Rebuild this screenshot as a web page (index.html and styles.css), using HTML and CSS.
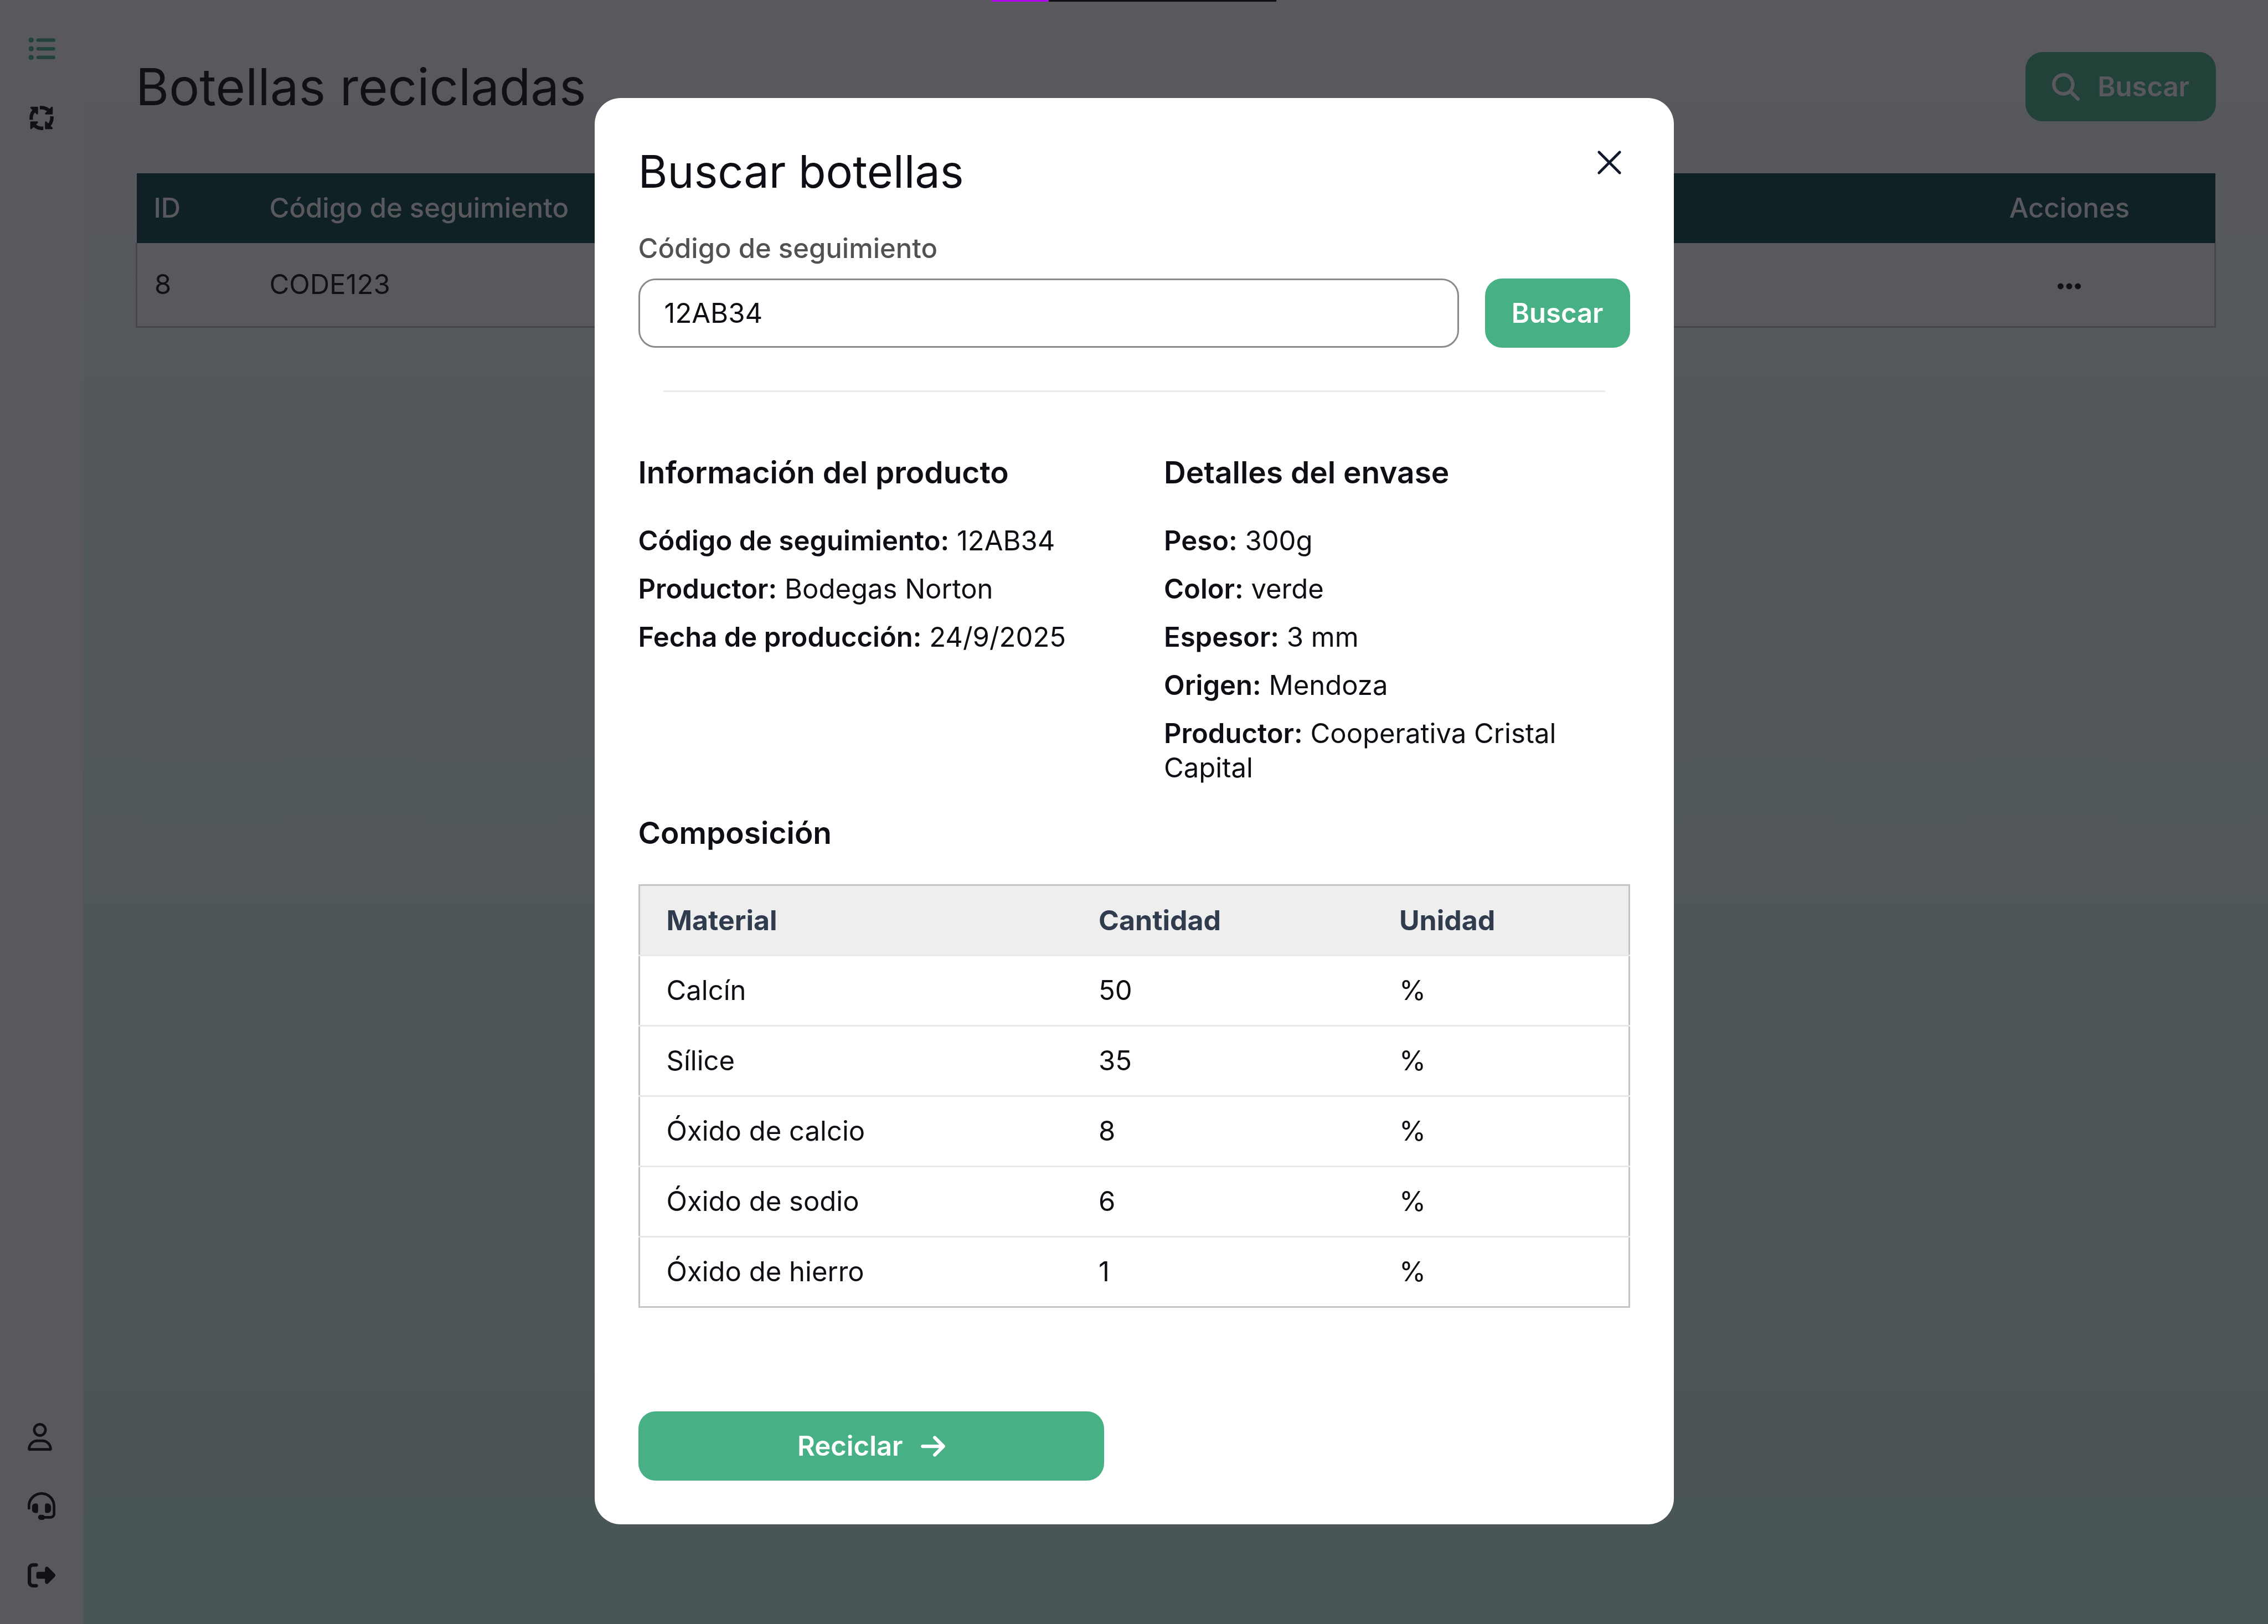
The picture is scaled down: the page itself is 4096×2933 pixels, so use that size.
FILE: index.html
```html
<!DOCTYPE html>
<html lang="es">
<head>
<meta charset="utf-8">
<title>Botellas recicladas</title>
<link rel="stylesheet" href="styles.css">
</head>
<body>
<div class="app">
  <nav class="sidebar" aria-label="Principal">
    <div class="nav-group">
      <a class="nav-link active" href="#botellas" aria-label="Botellas"><svg class="icon" viewBox="0 0 512 512"><path d="M64 144a48 48 0 1 0 0-96 48 48 0 1 0 0 96zM192 64c-17.700 0-32 14.300-32 32s14.300 32 32 32H480c17.700 0 32-14.300 32-32s-14.300-32-32-32H192zm0 160c-17.700 0-32 14.300-32 32s14.300 32 32 32H480c17.700 0 32-14.300 32-32s-14.300-32-32-32H192zm0 160c-17.700 0-32 14.300-32 32s14.300 32 32 32H480c17.700 0 32-14.300 32-32s-14.300-32-32-32H192zM64 464a48 48 0 1 0 0-96 48 48 0 1 0 0 96zm48-208a48 48 0 1 0 -96 0 48 48 0 1 0 96 0z"/></svg></a>
      <a class="nav-link" href="#reciclaje" aria-label="Reciclaje"><svg class="icon" viewBox="0 0 512 512"><path d="M256 96c38.4 0 73.700 13.500 101.300 36.100l-32.600 32.600c-4.600 4.600-5.900 11.500-3.500 17.400s8.300 9.900 14.800 9.900H448c8.800 0 16-7.200 16-16V64c0-6.500-3.900-12.300-9.900-14.800s-12.900-1.100-17.400 3.500l-34 34C363.400 52.600 312.100 32 256 32c-10.900 0-21.500 .8-32 2.300V99.200c10.300-2.100 21-3.200 32-3.200zM132.100 154.700l32.600 32.600c4.600 4.600 11.500 5.900 17.400 3.500s9.900-8.300 9.900-14.800V64c0-8.800-7.200-16-16-16H64c-6.500 0-12.300 3.900-14.800 9.900s-1.100 12.900 3.500 17.400l34 34C52.600 148.600 32 199.900 32 256c0 10.900 .8 21.500 2.300 32H99.200c-2.100-10.300-3.200-21-3.200-32c0-38.400 13.500-73.700 36.100-101.300zM477.700 224H412.800c2.100 10.300 3.200 21 3.200 32c0 38.400-13.500 73.700-36.100 101.300l-32.600-32.600c-4.600-4.600-11.500-5.900-17.400-3.500s-9.900 8.300-9.900 14.800V448c0 8.800 7.200 16 16 16H448c6.500 0 12.300-3.900 14.800-9.900s1.100-12.900-3.500-17.400l-34-34C459.400 363.400 480 312.100 480 256c0-10.900-.8-21.500-2.300-32zM256 416c-38.400 0-73.700-13.500-101.300-36.100l32.600-32.600c4.600-4.600 5.900-11.500 3.500-17.400s-8.300-9.900-14.800-9.900H64c-8.800 0-16 7.200-16 16l0 112c0 6.500 3.900 12.300 9.900 14.800s12.900 1.100 17.400-3.500l34-34C148.600 459.400 199.900 480 256 480c10.900 0 21.500-.8 32-2.300V412.800c-10.300 2.100-21 3.200-32 3.200z"/></svg></a>
    </div>
    <div class="nav-group">
      <a class="nav-link" href="#perfil" aria-label="Perfil"><svg class="icon icon-narrow" viewBox="0 0 448 512"><path d="M304 128a80 80 0 1 0 -160 0 80 80 0 1 0 160 0zM96 128a128 128 0 1 1 256 0A128 128 0 1 1 96 128zM49.300 464H398.700c-8.900-63.300-63.300-112-129-112H178.300c-65.700 0-120.100 48.700-129 112zM0 482.300C0 383.800 79.800 304 178.300 304h91.400C368.200 304 448 383.800 448 482.300c0 16.400-13.300 29.700-29.700 29.700H29.700C13.300 512 0 498.700 0 482.300z"/></svg></a>
      <a class="nav-link" href="#soporte" aria-label="Soporte"><svg class="icon" viewBox="0 0 512 512"><path d="M256 48C141.100 48 48 141.100 48 256v40c0 13.300-10.700 24-24 24s-24-10.700-24-24V256C0 114.600 114.600 0 256 0S512 114.600 512 256V400.100c0 48.600-39.400 88-88.100 88L313.600 488c-8.300 14.300-23.800 24-41.600 24H240c-26.500 0-48-21.500-48-48s21.500-48 48-48h32c17.800 0 33.300 9.700 41.600 24l110.400 .1c22.100 0 40-17.900 40-40V256c0-114.900-93.100-208-208-208zM144 208h16c17.700 0 32 14.300 32 32V352c0 17.700-14.300 32-32 32H144c-35.300 0-64-28.700-64-64V272c0-35.300 28.700-64 64-64zm224 0c35.300 0 64 28.700 64 64v48c0 35.300-28.700 64-64 64H352c-17.700 0-32-14.300-32-32V240c0-17.700 14.300-32 32-32h16z"/></svg></a>
      <a class="nav-link" href="#salir" aria-label="Salir"><svg class="icon" viewBox="0 0 512 512"><path d="M377.900 105.900L500.700 228.700c7.200 7.200 11.300 17.100 11.300 27.300s-4.100 20.100-11.300 27.300L377.900 406.100c-6.400 6.400-15 9.900-24 9.900c-18.700 0-33.900-15.200-33.900-33.900l0-62.100-128 0c-17.700 0-32-14.300-32-32l0-64c0-17.700 14.300-32 32-32l128 0 0-62.100c0-18.700 15.200-33.900 33.900-33.900c9 0 17.600 3.600 24 9.900zM160 96L96 96c-17.700 0-32 14.300-32 32l0 256c0 17.700 14.300 32 32 32l64 0c17.700 0 32 14.300 32 32s-14.300 32-32 32l-64 0c-53 0-96-43-96-96L0 128C0 75 43 32 96 32l64 0c17.700 0 32 14.300 32 32s-14.300 32-32 32z"/></svg></a>
    </div>
  </nav>

  <main class="main">
    <header class="page-header">
      <h1 class="page-title">Botellas recicladas</h1>
      <button class="btn" type="button"><svg class="icon" viewBox="0 0 512 512"><path d="M416 208c0 45.900-14.900 88.300-40 122.700L502.600 457.400c12.500 12.500 12.500 32.800 0 45.300s-32.800 12.500-45.300 0L330.700 376c-34.400 25.200-76.800 40-122.700 40C93.100 416 0 322.900 0 208S93.100 0 208 0S416 93.100 416 208zM208 352a144 144 0 1 0 0-288 144 144 0 1 0 0 288z"/></svg>Buscar</button>
    </header>
    <table class="bottles">
      <thead>
        <tr><th class="col-id">ID</th><th>Código de seguimiento</th><th class="col-actions">Acciones</th></tr>
      </thead>
      <tbody>
        <tr>
          <td>8</td>
          <td>CODE123</td>
          <td class="col-actions"><button class="icon-btn" type="button" aria-label="Acciones"><svg class="icon icon-narrow" viewBox="0 0 448 512"><path d="M8 256a56 56 0 1 1 112 0A56 56 0 1 1 8 256zm160 0a56 56 0 1 1 112 0 56 56 0 1 1 -112 0zm216-56a56 56 0 1 1 0 112 56 56 0 1 1 0-112z"/></svg></button></td>
        </tr>
      </tbody>
    </table>
  </main>
</div>

<div class="overlay">
  <section class="modal" role="dialog" aria-modal="true" aria-labelledby="modal-title">
    <header class="modal-header">
      <h2 class="modal-title" id="modal-title">Buscar botellas</h2>
      <button class="icon-btn" type="button" aria-label="Cerrar"><svg class="close-icon" viewBox="0 0 24 24"><path d="M6 18 18 6M6 6l12 12"/></svg></button>
    </header>

    <form class="search">
      <label class="search-label" for="codigo">Código de seguimiento</label>
      <div class="search-row">
        <input class="search-input" id="codigo" type="text" value="12AB34">
        <button class="btn" type="button">Buscar</button>
      </div>
    </form>

    <hr class="divider">

    <div class="details">
      <section>
        <h3 class="section-title">Información del producto</h3>
        <ul class="facts">
          <li><strong>Código de seguimiento:</strong> 12AB34</li>
          <li><strong>Productor:</strong> Bodegas Norton</li>
          <li><strong>Fecha de producción:</strong> 24/9/2025</li>
        </ul>
      </section>
      <section>
        <h3 class="section-title">Detalles del envase</h3>
        <ul class="facts">
          <li><strong>Peso:</strong> 300g</li>
          <li><strong>Color:</strong> verde</li>
          <li><strong>Espesor:</strong> 3 mm</li>
          <li><strong>Origen:</strong> Mendoza</li>
          <li><strong>Productor:</strong> Cooperativa Cristal Capital</li>
        </ul>
      </section>
    </div>

    <h3 class="section-title composition-title">Composición</h3>
    <table class="composition">
      <colgroup><col class="col-material"><col class="col-amount"><col></colgroup>
      <thead>
        <tr><th>Material</th><th>Cantidad</th><th>Unidad</th></tr>
      </thead>
      <tbody>
        <tr><td>Calcín</td><td>50</td><td>%</td></tr>
        <tr><td>Sílice</td><td>35</td><td>%</td></tr>
        <tr><td>Óxido de calcio</td><td>8</td><td>%</td></tr>
        <tr><td>Óxido de sodio</td><td>6</td><td>%</td></tr>
        <tr><td>Óxido de hierro</td><td>1</td><td>%</td></tr>
      </tbody>
    </table>

    <footer class="modal-footer">
      <button class="btn" type="button">Reciclar<svg class="icon icon-narrow" viewBox="0 0 448 512"><path d="M438.600 278.600c12.500-12.500 12.500-32.800 0-45.300l-160-160c-12.500-12.500-32.800-12.500-45.300 0s-12.500 32.800 0 45.300L338.800 224 32 224c-17.700 0-32 14.300-32 32s14.300 32 32 32l306.700 0L233.400 393.400c-12.500 12.500-12.500 32.800 0 45.300s32.800 12.500 45.300 0l160-160z"/></svg></button>
    </footer>
  </section>
</div>
<div class="progress" aria-hidden="true"><div class="progress-value"></div></div>
</body>
</html>
```
FILE: styles.css
```css
:root {
  --green: #47b185;
  --dark-green: #074645;
  --ink: #0f0e14;
  --border: #c4c4c4;
}

* {
  box-sizing: border-box;
}

body {
  margin: 0;
  color: var(--ink);
  font-family: Inter, "Liberation Sans", sans-serif;
  font-size: 49px;
  line-height: 62px;
}

h1, h2, h3, ul {
  margin: 0;
  padding: 0;
  list-style: none;
}

button, input {
  color: inherit;
  font: inherit;
}

table {
  width: 100%;
  border-collapse: collapse;
  table-layout: fixed;
}

th {
  text-align: left;
}

strong {
  font-weight: 600;
}

.icon {
  display: block;
  width: 50px;
  height: 50px;
  fill: currentColor;
}

.icon-narrow {
  width: 44px;
}

.btn {
  display: flex;
  align-items: center;
  justify-content: center;
  gap: 32px;
  height: 125px;
  padding: 0 48px;
  border: 0;
  border-radius: 31px;
  background: var(--green);
  color: #fff;
  font-weight: 600;
}

.icon-btn {
  display: inline-flex;
  padding: 0;
  border: 0;
  background: none;
}

/* Application frame */

.app {
  display: flex;
  min-height: 100vh;
  background: linear-gradient(#fff, #eefcfa 20%, #cbf5e7);
}

.sidebar {
  display: flex;
  flex: none;
  flex-direction: column;
  justify-content: space-between;
  width: 151px;
  padding: 63px 50px;
  background: #fff;
}

.nav-group {
  display: flex;
  flex-direction: column;
  gap: 75px;
}

.nav-link {
  color: var(--ink);
}

.nav-link.active {
  color: var(--green);
}

.main {
  flex: 1;
  padding: 94px;
}

.page-header {
  display: flex;
  align-items: center;
  justify-content: space-between;
  margin-bottom: 94px;
}

.page-title {
  font-size: 92px;
  font-weight: 400;
  line-height: 125px;
}

.bottles {
  background: #fff;
}

.bottles th {
  height: 126px;
  padding: 0 31px;
  background: var(--dark-green);
  color: #fff;
  font-weight: 500;
}

.bottles td {
  height: 151px;
  padding: 0 31px;
}

.bottles tbody {
  border: 3px solid var(--border);
  border-top: 0;
}

.bottles .col-id {
  width: 209px;
}

.bottles .col-actions {
  width: 526px;
  text-align: center;
}

.bottles .icon-btn {
  vertical-align: middle;
}

/* Search dialog */

.overlay {
  position: fixed;
  inset: 0;
  display: flex;
  align-items: flex-start;
  justify-content: center;
  padding-top: 177px;
  overflow: auto;
  background: rgba(19, 17, 24, 0.7);
}

.modal {
  width: 1949px;
  padding: 79px;
  border-radius: 47px;
  background: #fff;
}

.modal-header {
  display: flex;
  align-items: flex-start;
  justify-content: space-between;
  margin-bottom: 54px;
}

.modal-title {
  font-size: 81px;
  font-weight: 400;
  line-height: 108px;
}

.close-icon {
  display: block;
  width: 75px;
  height: 75px;
  fill: none;
  stroke: #0f172a;
  stroke-width: 1.5;
  stroke-linecap: round;
}

.search-label {
  display: block;
  margin-bottom: 23px;
  color: #525252;
  font-weight: 500;
}

.search-row {
  display: flex;
  gap: 47px;
}

.search-input {
  flex: 1;
  min-width: 0;
  height: 125px;
  padding: 0 44px;
  border: 3px solid #8a8a8a;
  border-radius: 31px;
  background: #fff;
}

.divider {
  height: 3px;
  margin: 77px 45px 110px;
  border: 0;
  background: #ebebeb;
}

.details {
  display: grid;
  grid-template-columns: 1fr 1fr;
  gap: 108px;
  margin-bottom: 51px;
}

.section-title {
  font-size: 55px;
  font-weight: 600;
  line-height: 70px;
}

.facts {
  display: flex;
  flex-direction: column;
  gap: 25px;
  margin-top: 58px;
}

.composition-title {
  margin-bottom: 58px;
}

.composition {
  border: 3px solid var(--border);
}

.composition th,
.composition td {
  height: 127px;
  padding: 0 48px;
}

.composition th {
  background: #eee;
  color: #303c4d;
  font-size: 50px;
  font-weight: 700;
}

.composition tr + tr,
.composition tbody tr {
  border-top: 3px solid #e5e7eb;
}

.col-material {
  width: 782px;
}

.col-amount {
  width: 543px;
}

.modal-footer {
  display: grid;
  grid-template-columns: 1fr 1fr;
  gap: 108px;
  margin-top: 187px;
}

/* Loading bar pinned to the top edge */

.progress {
  position: fixed;
  top: 0;
  left: 50%;
  width: 514px;
  height: 3px;
  transform: translateX(-50%);
  background: #100d14;
}

.progress-value {
  width: 20%;
  height: 100%;
  background: #b005f0;
}
```
